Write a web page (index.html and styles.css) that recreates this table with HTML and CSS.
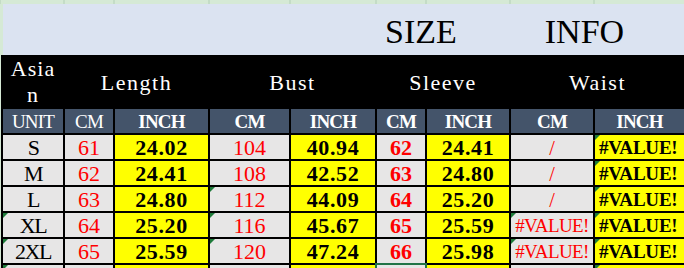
FILE: index.html
```html
<!DOCTYPE html>
<html>
<head>
<meta charset="utf-8">
<link rel="stylesheet" href="styles.css">
</head>
<body>
<div class="page">
  <div class="strip">
    <span></span><span></span><span></span><span></span><span></span><span></span><span></span><span></span><span></span>
  </div>
  <div class="title">
    <span class="t-size">SIZE</span>
    <span class="t-info">INFO</span>
  </div>
  <div class="sheet">
    <div class="hd hd-asian">Asia<br>n</div>
    <div class="hd span2">Length</div>
    <div class="hd span2">Bust</div>
    <div class="hd span2">Sleeve</div>
    <div class="hd span2">Waist</div>

    <div class="u">UNIT</div>
    <div class="u">CM</div>
    <div class="u b">INCH</div>
    <div class="u b">CM</div>
    <div class="u b">INCH</div>
    <div class="u b">CM</div>
    <div class="u b">INCH</div>
    <div class="u b">CM</div>
    <div class="u b">INCH</div>

    <div class="c g sz">S</div>
    <div class="c g red">61</div>
    <div class="c y b num">24.02</div>
    <div class="c g red">104</div>
    <div class="c y b num">40.94</div>
    <div class="c g red b">62</div>
    <div class="c y b num">24.41</div>
    <div class="c g red slash">/</div>
    <div class="c y b left errtxt err">#VALUE!</div>

    <div class="c g sz">M</div>
    <div class="c g red">62</div>
    <div class="c y b num">24.41</div>
    <div class="c g red">108</div>
    <div class="c y b num">42.52</div>
    <div class="c g red b">63</div>
    <div class="c y b num">24.80</div>
    <div class="c g red slash">/</div>
    <div class="c y b left errtxt err">#VALUE!</div>

    <div class="c g sz">L</div>
    <div class="c g red">63</div>
    <div class="c y b num">24.80</div>
    <div class="c g red err">112</div>
    <div class="c y b num">44.09</div>
    <div class="c g red b">64</div>
    <div class="c y b num">25.20</div>
    <div class="c g red slash">/</div>
    <div class="c y b left errtxt err">#VALUE!</div>

    <div class="c g sz err">XL</div>
    <div class="c g red">64</div>
    <div class="c y b num">25.20</div>
    <div class="c g red err">116</div>
    <div class="c y b num">45.67</div>
    <div class="c g red b">65</div>
    <div class="c y b num">25.59</div>
    <div class="c g red errred err">#VALUE!</div>
    <div class="c y b left errtxt err">#VALUE!</div>

    <div class="c g sz err">2XL</div>
    <div class="c g red">65</div>
    <div class="c y b num">25.59</div>
    <div class="c g red err">120</div>
    <div class="c y b num">47.24</div>
    <div class="c g red b">66</div>
    <div class="c y b num">25.98</div>
    <div class="c g red errred err">#VALUE!</div>
    <div class="c y b left errtxt err">#VALUE!</div>

    <div class="c g err"></div>
    <div class="c g"></div>
    <div class="c y"></div>
    <div class="c g"></div>
    <div class="c y"></div>
    <div class="c g sel"></div>
    <div class="c y"></div>
    <div class="c g"></div>
    <div class="c y err"></div>
  </div>
</div>
</body>
</html>
```

FILE: styles.css
```css
html, body {
  margin: 0;
  padding: 0;
}
body {
  background: #d5e9d5;
  width: 684px;
  height: 268px;
  overflow: hidden;
}
.page {
  width: 684px;
}
.strip {
  height: 4px;
  display: grid;
  grid-template-columns: 62px 48px 93px 79px 84px 48px 82px 82px 89px;
  column-gap: 2px;
  padding-left: 1px;
  background: #c4dcc6;
}
.strip span {
  background: #d5e9d5;
}
.title {
  height: 51px;
  margin-left: 3px;
  background: #dbe3f1;
  box-sizing: border-box;
  padding-top: 11px;
  display: flex;
  font-family: "Liberation Serif", "Times New Roman", serif;
  font-size: 34px;
  line-height: 34px;
  color: #000;
}
.t-size {
  margin-left: 382px;
}
.t-info {
  margin-left: 88px;
}
.sheet {
  display: grid;
  grid-template-columns: 60px 48px 93px 79px 84px 48px 82px 82px 89px;
  grid-auto-rows: 24px;
  grid-template-rows: 52px;
  gap: 2px;
  background: #000;
  margin-left: 1px;
  padding-left: 2px;
  font-family: "Liberation Serif", "Times New Roman", serif;
  font-size: 22px;
  line-height: 24px;
}
.hd {
  background: #000;
  color: #fff;
  display: flex;
  align-items: center;
  justify-content: center;
  text-align: center;
  letter-spacing: 1.5px;
  padding-top: 4px;
}
.hd-asian {
  line-height: 26px;
  letter-spacing: 1px;
  padding-top: 2px;
}
.span2 {
  grid-column: span 2;
}
.u {
  background: #44546a;
  color: #fff;
  display: flex;
  align-items: center;
  justify-content: center;
  font-size: 19px;
  letter-spacing: -0.8px;
  padding-top: 2px;
}
.c {
  position: relative;
  display: flex;
  align-items: center;
  justify-content: center;
  color: #000;
  padding-top: 1px;
}
.sz {
  letter-spacing: -1.5px;
}
.num {
  letter-spacing: 0.6px;
}
.slash {
  font-size: 20px;
}
.errtxt {
  font-size: 19px;
  letter-spacing: -0.2px;
}
.errred {
  font-size: 19px;
  letter-spacing: -0.6px;
}
.g {
  background: #e7e6e6;
}
.y {
  background: #ffff00;
}
.red {
  color: #ff0000;
}
.b {
  font-weight: bold;
}
.left {
  justify-content: flex-start;
  padding-left: 4px;
}
.err::before {
  content: "";
  position: absolute;
  top: 0;
  left: 0;
  border-top: 5px solid #1e7b3a;
  border-right: 5px solid transparent;
}
.sel {
  outline: 2px solid #217346;
}
```
